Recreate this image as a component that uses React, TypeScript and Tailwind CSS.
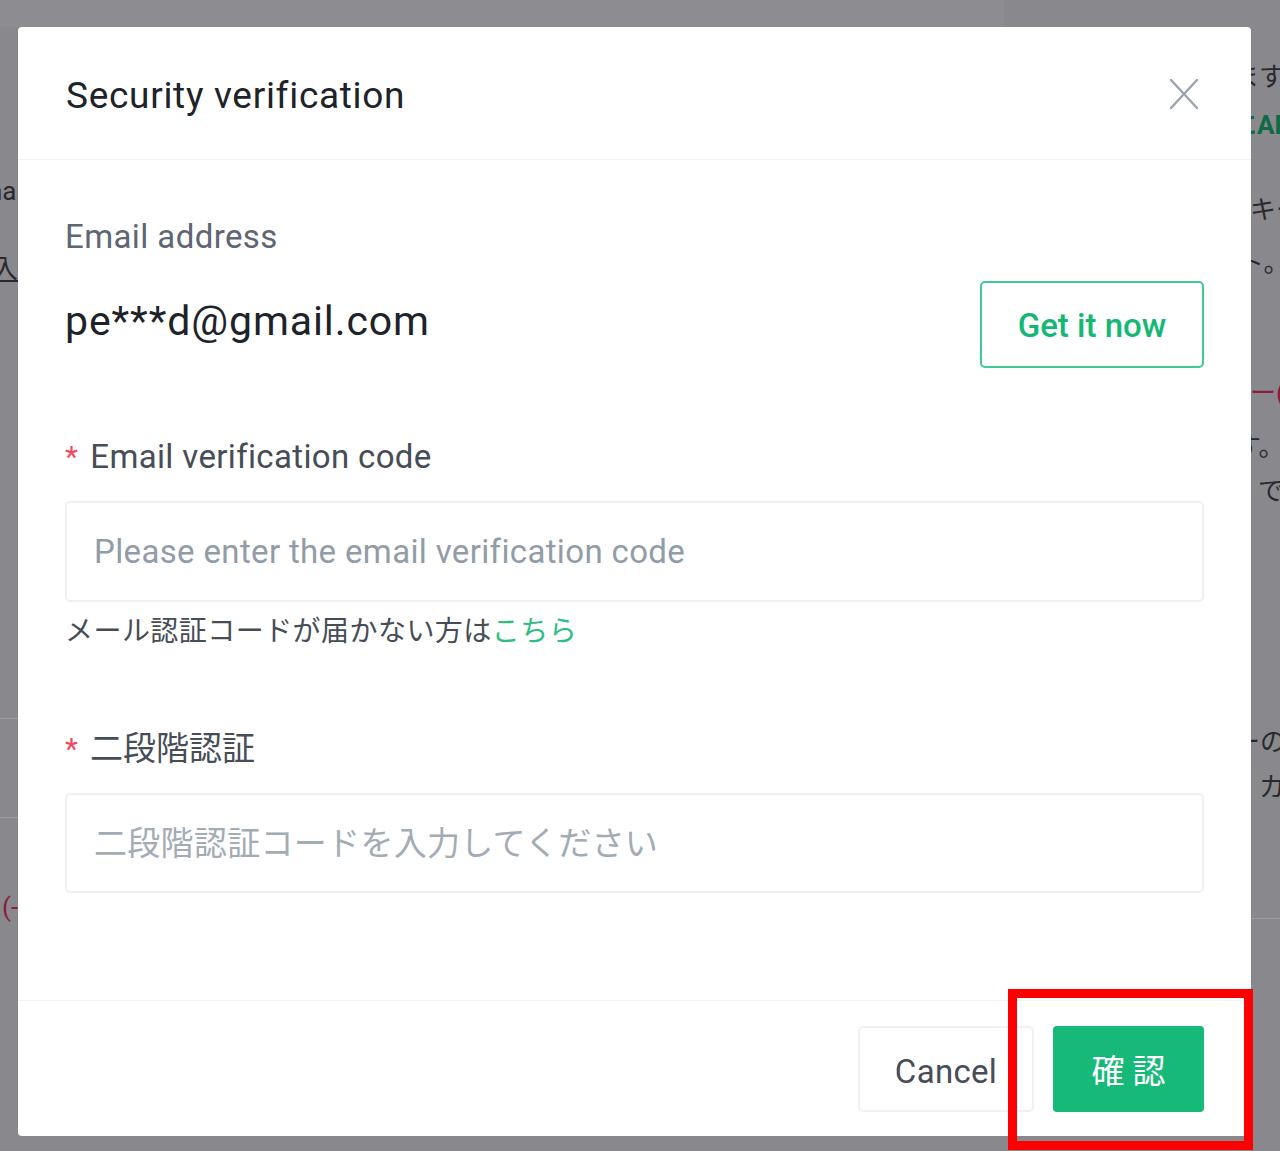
import { useState } from 'react';

const FONT = "font-['Roboto','Noto_Sans_CJK_JP',sans-serif]";

// bits of the page that peek out from behind the dialog
const BACKDROP_TEXT = [
  { text: 'ます', cls: 'left-[1233px] top-[60px] text-[#29292d]' },
  { text: 'にAPI', cls: 'left-[1231px] top-[108px] font-bold text-[#0f6a45]' },
  { text: 'キー', cls: 'left-[1250px] top-[193px] text-[#29292d]' },
  { text: 'ト。', cls: 'left-[1238px] top-[246px] text-[#29292d]' },
  { text: 'ー(', cls: 'left-[1250px] top-[376px] text-[#8a1d3b]' },
  { text: 'す。', cls: 'left-[1235px] top-[430px] text-[#29292d]' },
  { text: 'で', cls: 'left-[1258px] top-[474px] text-[#29292d]' },
  { text: 'ーの', cls: 'left-[1234px] top-[725px] text-[#29292d]' },
  { text: 'カ', cls: 'left-[1259px] top-[770px] text-[#29292d]' },
  { text: 'na', cls: 'left-[-12px] top-[174px] text-[#29292d]' },
  { text: '入', cls: 'left-[-8px] top-[252px] text-[#29292d] underline' },
  { text: '(-', cls: 'left-[2px] top-[890px] text-[#8a1d3b]' },
];

function CloseIcon() {
  return (
    <svg width="30" height="32" viewBox="0 0 30 32" fill="none">
      <path d="M2 2 L28 30 M28 2 L2 30" stroke="#9ba4ae" strokeWidth="2.4" strokeLinecap="round" />
    </svg>
  );
}

export default function App() {
  const [code, setCode] = useState('');
  const [otp, setOtp] = useState('');

  return (
    <div className={`relative w-[1280px] h-[1151px] overflow-hidden bg-[#89898d] ${FONT}`}>
      {/* page behind the overlay */}
      <div className="absolute left-0 top-0 w-[1004px] h-[27px] bg-[#8d8d91]" />
      <div className="absolute left-0 top-[718px] w-[18px] h-px bg-[#9b9b9f]" />
      <div className="absolute left-0 top-[817px] w-[18px] h-px bg-[#9b9b9f]" />
      <div className="absolute left-[1251px] top-[918px] w-[29px] h-px bg-[#9b9b9f]" />
      {BACKDROP_TEXT.map(b => (
        <span key={b.text} className={`absolute text-[26px] leading-[34px] whitespace-nowrap ${b.cls}`}>
          {b.text}
        </span>
      ))}

      {/* dialog */}
      <div className="absolute left-[18px] top-[27px] w-[1233px] h-[1109px] bg-white rounded-[4px] flex flex-col">
        <div className="h-[133px] flex items-center justify-between pl-[48px] pr-[52px] border-b border-[#f2f3f5] shrink-0">
          <h2 className="text-[37px] leading-[44px] text-[#1e2329] tracking-[0.7px] mt-[5px]">Security verification</h2>
          <button type="button" className="mt-[2px]">
            <CloseIcon />
          </button>
        </div>

        <div className="flex-1 px-[47px] pt-[57px]">
          <p className="text-[33px] leading-[40px] text-[#5e6673] tracking-[0.4px]">Email address</p>
          <div className="mt-[24px] flex items-center justify-between">
            <span className="text-[41px] leading-[48px] text-[#1e2329] tracking-[0.9px] -mt-[8px]">pe***d@gmail.com</span>
            <button
              type="button"
              className="w-[224px] h-[87px] border-2 border-[#3ccb92] rounded-[5px] text-[33px] text-[#14b874] font-medium pt-[3px]"
            >
              Get it now
            </button>
          </div>

          <p className="mt-[69px] text-[33px] leading-[40px] text-[#474d57] tracking-[0.35px] flex items-center">
            <span className="text-[#f6465d] mr-[12px] text-[30px]">*</span>Email verification code
          </p>
          <input
            value={code}
            onChange={e => setCode(e.target.value)}
            placeholder="Please enter the email verification code"
            className="mt-[24px] w-full h-[101px] border-2 border-[#eef0f2] rounded-[5px] px-[27px] text-[33px] tracking-[0.35px] text-[#1e2329] placeholder:text-[#929ca7] outline-none"
          />
          <p className="mt-[12px] text-[28px] leading-[36px] text-[#474d57] tracking-[0.45px]">
            メール認証コードが届かない方は<span className="text-[#2dbd85]">こちら</span>
          </p>

          <p className="mt-[79px] text-[33px] leading-[40px] text-[#474d57] flex items-center">
            <span className="text-[#f6465d] mr-[12px] text-[30px]">*</span>二段階認証
          </p>
          <input
            value={otp}
            onChange={e => setOtp(e.target.value)}
            placeholder="二段階認証コードを入力してください"
            className="mt-[24px] w-full h-[100px] border-2 border-[#eef0f2] rounded-[5px] px-[27px] text-[33px] tracking-[0.3px] text-[#1e2329] placeholder:text-[#a3abb4] outline-none"
          />
        </div>

        <div className="h-[136px] border-t border-[#f2f3f5] flex items-center justify-end gap-[19px] pr-[47px] pt-[1px] shrink-0">
          <button
            type="button"
            className="w-[176px] h-[86px] border-2 border-[#f0f1f3] rounded-[5px] text-[33px] text-[#474d57] pt-[5px] tracking-[0.3px]"
          >
            Cancel
          </button>
          <button
            type="button"
            className="w-[151px] h-[86px] bg-[#17b978] rounded-[4px] text-[33px] text-white tracking-[8px] pl-[8px] pt-[6px]"
          >
            確認
          </button>
        </div>
      </div>

      {/* annotation box */}
      <div className="absolute left-[1008px] top-[989px] w-[245px] h-[161px] border-[9px] border-[#ff0000]" />
    </div>
  );
}
